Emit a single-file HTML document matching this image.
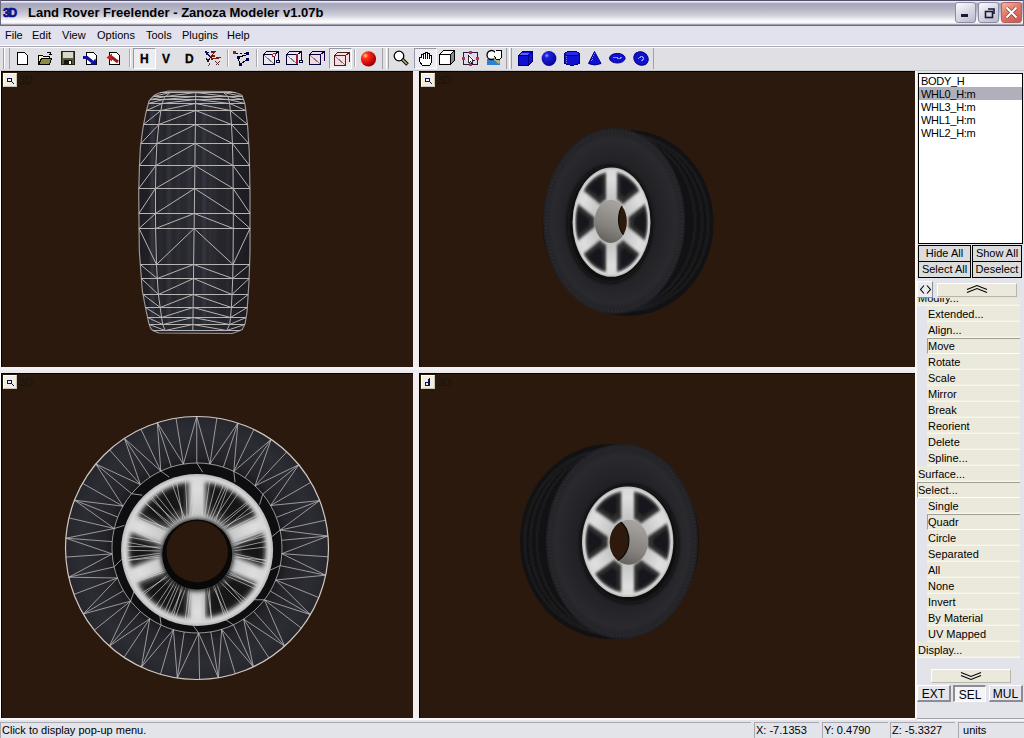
<!DOCTYPE html>
<html><head><meta charset="utf-8">
<style>
*{margin:0;padding:0;box-sizing:border-box}
html,body{width:1024px;height:738px;overflow:hidden;background:#e3e3ea;font-family:"Liberation Sans",sans-serif;font-size:11px;color:#000}
.a{position:absolute}
svg{position:absolute;overflow:visible}
#title{left:0;top:0;width:1024px;height:26px;background:linear-gradient(to bottom,#50506a 0,#50506a 1px,#eaeaf8 1px,#eaeaf8 2px,#b4b4c8 3px,#a6a6ba 4px,#b8b8c8 10px,#d4d4de 16px,#ececf0 19px,#ffffff 22px,#d8d8e0 24px,#6c6c7c 25px,#6c6c7c 26px)}
#title .t{left:28px;top:5px;font-size:13px;font-weight:bold;color:#000;white-space:nowrap}
.tbtn{width:21px;height:21px;border-radius:3px;border:1px solid #8c8ca4;background:linear-gradient(150deg,#fafafe 0%,#dcdce8 45%,#b8b8cc 100%)}
#menu{left:0;top:26px;width:1024px;height:19px;background:#e2e2ee}
#menu span{position:absolute;top:3px;font-size:11px;white-space:nowrap}
.vp{background:#2a190c;border-left:1px solid #000;border-top:1px solid #000;overflow:hidden}
.ico{width:14px;height:14px;background:#efeee0;border-top:1px solid #fff;border-left:1px solid #fff;border-right:1px solid #c8c6b4;border-bottom:1px solid #c8c6b4}
.l3d{color:#181412;font-size:11px;position:absolute}
.lb div{position:absolute;left:0px;height:13px;line-height:15px;width:103px;padding-left:2px;white-space:nowrap;letter-spacing:-0.3px}
.btn{position:absolute;background:#dcdcdc;border:1px solid #000;text-align:center;line-height:14px;font-size:11px;white-space:nowrap}
.ri{position:absolute;height:16px;line-height:17px;background:linear-gradient(to bottom,#ebe9db 0,#ebe9db 14px,#f6f5ee 15px);white-space:nowrap;padding-left:1px}
.box{border-top:1px solid #a09f94;border-left:1px solid #a09f94;border-bottom:1px solid #fff;line-height:15px;padding-left:0}
.sp{position:absolute;top:722px;height:16px;border-top:1px solid #a8a8b0;border-left:1px solid #a8a8b0;padding-left:1px;line-height:15px;white-space:nowrap}
</style></head><body>

<div id="title" class="a"><div class="a t">Land Rover Freelender - Zanoza Modeler v1.07b</div>
<svg style="left:3px;top:7px" width="16" height="11" viewBox="0 0 16 11"><text x="0" y="10" font-family="Liberation Sans" font-weight="bold" font-size="12" fill="#10108c" stroke="#10108c" stroke-width="0.7" letter-spacing="-1.2">3D</text></svg>
<div class="a" style="left:0;top:0;width:1px;height:26px;background:#6a6a80"></div><div class="a" style="left:1023px;top:0;width:1px;height:26px;background:#6a6a80"></div>
</div>
<div class="a tbtn" style="left:955px;top:2px"></div>
<div class="a tbtn" style="left:978px;top:2px"></div>
<div class="a tbtn" style="left:1001px;top:2px;border-color:#b06060;background:linear-gradient(150deg,#f4b8a0 0%,#e07868 45%,#c85850 100%)"></div>
<svg style="left:955px;top:2px" width="21" height="21"><rect x="6" y="12" width="7" height="3" fill="#1a1a30"/></svg>
<svg style="left:978px;top:2px" width="21" height="21"><rect x="7.5" y="9.5" width="7" height="6" fill="none" stroke="#1a1a30" stroke-width="1.6"/><path d="M10 7 H16 V12" fill="none" stroke="#1a1a30" stroke-width="1.6"/></svg>
<svg style="left:1001px;top:2px" width="21" height="21"><path d="M5.5 5.5 L15.5 15.5 M15.5 5.5 L5.5 15.5" stroke="#502828" stroke-width="3.4" opacity="0.6"/><path d="M5.5 5.5 L15.5 15.5 M15.5 5.5 L5.5 15.5" stroke="#fff" stroke-width="2"/></svg>
<div id="menu" class="a">
<span style="left:5px">File</span>
<span style="left:32px">Edit</span>
<span style="left:62px">View</span>
<span style="left:97px">Options</span>
<span style="left:146px">Tools</span>
<span style="left:182px">Plugins</span>
<span style="left:227px">Help</span>
</div>
<div class="a" style="left:0;top:45px;width:1024px;height:1px;background:#fff"></div>
<div class="a" style="left:0;top:46px;width:1024px;height:1px;background:#a8a8b4"></div>
<div class="a" style="left:0;top:47px;width:1024px;height:24px;background:#e0dfe4"></div>
<div class="a" style="left:0;top:70px;width:1024px;height:1px;background:#c4c4cc"></div>
<div class="a" style="left:0;top:47px;width:1024px;height:1px;background:#fbfbfd"></div>
<div class="a" style="left:3px;top:48px;width:1px;height:21px;background:#a0a0a8"></div>
<div class="a" style="left:4px;top:48px;width:1px;height:21px;background:#fff"></div>
<div class="a" style="left:9px;top:48px;width:1px;height:21px;background:#a0a0a8"></div>
<div class="a" style="left:129px;top:49px;width:1px;height:18px;background:#a8a8b0"></div>
<div class="a" style="left:130px;top:49px;width:1px;height:18px;background:#fff"></div>
<div class="a" style="left:227px;top:49px;width:1px;height:18px;background:#a8a8b0"></div>
<div class="a" style="left:228px;top:49px;width:1px;height:18px;background:#fff"></div>
<div class="a" style="left:256px;top:49px;width:1px;height:18px;background:#a8a8b0"></div>
<div class="a" style="left:257px;top:49px;width:1px;height:18px;background:#fff"></div>
<div class="a" style="left:354px;top:49px;width:1px;height:18px;background:#a8a8b0"></div>
<div class="a" style="left:355px;top:49px;width:1px;height:18px;background:#fff"></div>
<div class="a" style="left:382px;top:48px;width:1px;height:21px;background:#a0a0a8"></div>
<div class="a" style="left:386px;top:48px;width:1px;height:21px;background:#fff"></div>
<div class="a" style="left:388px;top:48px;width:1px;height:21px;background:#a0a0a8"></div>
<div class="a" style="left:506px;top:48px;width:1px;height:21px;background:#a0a0a8"></div>
<div class="a" style="left:509px;top:48px;width:1px;height:21px;background:#fff"></div>
<div class="a" style="left:511px;top:48px;width:1px;height:21px;background:#a0a0a8"></div>
<div class="a" style="left:653px;top:48px;width:1px;height:21px;background:#a0a0a8"></div>
<div class="a" style="left:133px;top:48px;width:23px;height:21px;border-top:1px solid #9a9aa4;border-left:1px solid #9a9aa4;border-right:1px solid #fff;border-bottom:1px solid #fff;background:repeating-conic-gradient(#f4f4f8 0 25%,#e4e4ea 0 50%) 0 0/2px 2px"></div>
<div class="a" style="left:329px;top:48px;width:23px;height:21px;border-top:1px solid #9a9aa4;border-left:1px solid #9a9aa4;border-right:1px solid #fff;border-bottom:1px solid #fff;background:repeating-conic-gradient(#f4f4f8 0 25%,#e4e4ea 0 50%) 0 0/2px 2px"></div>
<div class="a" style="left:414px;top:48px;width:23px;height:21px;border-top:1px solid #9a9aa4;border-left:1px solid #9a9aa4;border-right:1px solid #fff;border-bottom:1px solid #fff;background:repeating-conic-gradient(#f4f4f8 0 25%,#e4e4ea 0 50%) 0 0/2px 2px"></div>
<svg style="left:17px;top:52px" width="12" height="13" viewBox="0 0 12 13" shape-rendering="crispEdges"><path d="M0.5 0.5 H7.5 L10.5 3.5 V12.5 H0.5 Z" fill="#fff" stroke="#000"/></svg>
<svg style="left:37px;top:50px" width="16" height="16" viewBox="0 0 16 16" shape-rendering="crispEdges"><path d="M1.5 5.5 H5.5 L6.5 6.5 H12.5 V8.5 H4.5 L1.5 13.5 Z" fill="#f4f4b8" stroke="#000"/><path d="M1.5 14.5 L4.5 8.5 H14.5 L12.5 14.5 Z" fill="#8c8c40" stroke="#000"/><path d="M9.5 2.5 H13.5 V4.5 M12 4.5 H15" stroke="#000" fill="none"/></svg>
<svg style="left:61px;top:51px" width="15" height="14" viewBox="0 0 15 14" shape-rendering="crispEdges"><rect x="0.5" y="0.5" width="13" height="13" fill="#5a5a38" stroke="#202010"/><rect x="2" y="1" width="10" height="6" fill="#d8d8cc"/><rect x="3" y="9" width="8" height="4" fill="#181810"/><rect x="8" y="10" width="2" height="3" fill="#fff"/></svg>
<svg style="left:83px;top:51px" width="16" height="15" viewBox="0 0 16 15" shape-rendering="crispEdges"><path d="M3.5 1.5 H10.5 L13.5 4.5 V13.5 H3.5 Z" fill="#fff" stroke="#000"/><path d="M0 6.5 H4 L9.5 11" stroke="#1010a0" stroke-width="3" fill="none" shape-rendering="auto"/><path d="M7 13.5 L13.5 13.5 L12.5 7.5 Z" fill="#1010a0" shape-rendering="auto"/></svg>
<svg style="left:106px;top:51px" width="16" height="15" viewBox="0 0 16 15" shape-rendering="crispEdges"><path d="M3.5 1.5 H10.5 L13.5 4.5 V13.5 H3.5 Z" fill="#fff" stroke="#000"/><path d="M4 6.5 H6 L12 11" stroke="#a01818" stroke-width="3" fill="none" shape-rendering="auto"/><path d="M0.5 6.5 L6 2.5 L6 10.5 Z" fill="#c02020" shape-rendering="auto"/></svg>
<div class="a" style="left:140px;top:52px;font-size:12px;font-weight:bold;line-height:14px;-webkit-text-stroke:0.3px #000">H</div>
<div class="a" style="left:162px;top:52px;font-size:12px;font-weight:bold;line-height:14px;-webkit-text-stroke:0.3px #000">V</div>
<div class="a" style="left:185px;top:52px;font-size:12px;font-weight:bold;line-height:14px;-webkit-text-stroke:0.3px #000">D</div>
<svg style="left:204px;top:50px" width="18" height="17" viewBox="0 0 18 17" shape-rendering="crispEdges"><path d="M2 2 L7 8" stroke="#101060" stroke-width="1.5"/><path d="M1 1 L5 2 L2 5 Z" fill="#101060"/><path d="M7 2 H11 L7 6 H11" stroke="#701818" stroke-width="1.3" fill="none"/><path d="M7 9 L17 7.5" stroke="#801818" stroke-width="1.5"/><path d="M2 8.5 L4 11 L6 8.5 M4 11 V12" stroke="#201010" stroke-width="1.2" fill="none"/><path d="M4.5 12 L7 14 L4.5 15.5 Z" fill="#207020"/><path d="M11.5 11.5 L15.5 15.5 M15.5 11.5 L11.5 15.5" stroke="#502020" stroke-width="1.2"/></svg>
<svg style="left:233px;top:50px" width="17" height="17" viewBox="0 0 17 17" shape-rendering="crispEdges"><rect x="0" y="1" width="3" height="3" fill="#902030"/><path d="M3 3 H13" stroke="#000020" stroke-dasharray="2 2"/><rect x="13" y="2" width="3" height="3" fill="#000050"/><path d="M13 5 L6 7" stroke="#000"/><rect x="4" y="6" width="3" height="3" fill="#000050"/><path d="M5.5 9 L7 14 L14 10" stroke="#000" fill="none"/><rect x="6" y="13" width="3" height="3" fill="#000050"/><rect x="13" y="8" width="3" height="3" fill="#000050"/></svg>
<svg style="left:263px;top:50px" width="17" height="16" viewBox="0 0 17 16" shape-rendering="crispEdges"><path d="M0.5 4.5 L3.5 1.5 H15.5 V11.5 L11.5 14.5 H0.5 Z" fill="#eae8f0" stroke="none"/><path d="M3.5 1.5 H15.5 V11 M0.5 4.5 L3.5 1.5 M11.5 4.5 L15.5 1.5" stroke="#000030" fill="none"/><rect x="0.5" y="4.5" width="11" height="10" rx="1.5" fill="none" stroke="#000030" stroke-width="1.2"/><path d="M1.5 5.5 L11 14" stroke="#808080"/><circle cx="11" cy="5" r="1.5" fill="#fff" stroke="#a02030"/><circle cx="15" cy="11.5" r="1.5" fill="#fff" stroke="#000030"/></svg>
<svg style="left:286px;top:50px" width="17" height="16" viewBox="0 0 17 16" shape-rendering="crispEdges"><path d="M0.5 4.5 L3.5 1.5 H15.5 V11.5 L11.5 14.5 H0.5 Z" fill="#eae8f0" stroke="none"/><path d="M3.5 1.5 H15.5 V11 M0.5 4.5 L3.5 1.5 M11.5 4.5 L15.5 1.5" stroke="#000030" fill="none"/><rect x="0.5" y="4.5" width="11" height="10" rx="1.5" fill="none" stroke="#000030" stroke-width="1.2"/><path d="M1.5 5.5 L11 14" stroke="#808080"/><path d="M11 4 V14" stroke="#a02040" stroke-width="1.5"/><circle cx="15" cy="11.5" r="1.5" fill="#fff" stroke="#000030"/></svg>
<svg style="left:309px;top:50px" width="17" height="16" viewBox="0 0 17 16" shape-rendering="crispEdges"><path d="M0.5 4.5 L3.5 1.5 H15.5 V11.5 L11.5 14.5 H0.5 Z" fill="#f4d8e4" stroke="none"/><path d="M3.5 1.5 H15.5 V11 M0.5 4.5 L3.5 1.5 M11.5 4.5 L15.5 1.5" stroke="#000040" fill="none"/><rect x="0.5" y="4.5" width="11" height="10" rx="1.5" fill="none" stroke="#000040" stroke-width="1.2"/><path d="M1.5 5.5 L11 14" stroke="#808080"/></svg>
<svg style="left:334px;top:51px" width="17" height="16" viewBox="0 0 17 16" shape-rendering="crispEdges"><path d="M0.5 4.5 L3.5 1.5 H15.5 V11.5 L11.5 14.5 H0.5 Z" fill="#f8dce0" stroke="none"/><path d="M3.5 1.5 H15.5 V11 M0.5 4.5 L3.5 1.5 M11.5 4.5 L15.5 1.5" stroke="#502020" fill="none"/><rect x="0.5" y="4.5" width="11" height="10" rx="1.5" fill="none" stroke="#502020" stroke-width="1.2"/><path d="M1.5 5.5 L11 14" stroke="#808080"/></svg>
<svg style="left:360px;top:51px" width="17" height="16"><defs><radialGradient id="rs" cx="0.3" cy="0.3" r="0.75"><stop offset="0" stop-color="#ffe070"/><stop offset="0.25" stop-color="#ff3020"/><stop offset="0.7" stop-color="#d00808"/><stop offset="1" stop-color="#900000"/></radialGradient></defs><circle cx="8.5" cy="7.8" r="7.6" fill="url(#rs)"/></svg>
<svg style="left:393px;top:50px" width="17" height="17" viewBox="0 0 17 17" shape-rendering="crispEdges"><circle cx="6" cy="6" r="4.8" fill="#fff" stroke="#000" stroke-width="1.3" shape-rendering="auto"/><path d="M9 9 L14.5 14.5" stroke="#000" stroke-width="3.5" shape-rendering="auto"/><path d="M9.5 9.5 L14 14" stroke="#b8b870" stroke-width="1.6" shape-rendering="auto"/></svg>
<svg style="left:419px;top:52px" width="14" height="15" viewBox="0 0 14 15" shape-rendering="crispEdges"><path d="M3.5 13.5 L0.5 9.5 V5.5 H2.5 V2.5 H4.5 V1.5 H6.5 V0.5 H8.5 V1.5 H10.5 V3.5 H12.5 V10.5 L10.5 13.5 Z" fill="#fff" stroke="#000"/><path d="M4.5 2 V7 M6.5 1 V7 M8.5 1 V7 M10.5 3 V7" stroke="#000"/></svg>
<svg style="left:439px;top:50px" width="17" height="16" viewBox="0 0 17 16" shape-rendering="crispEdges"><path d="M0.5 4.5 L4.5 0.5 H15.5 V10.5 L11.5 14.5 Z" fill="#8a8a8a" stroke="#000"/><rect x="0.5" y="4.5" width="11" height="10" fill="#fff" stroke="#000"/><path d="M0.5 4.5 L4.5 0.5 H15.5 L11.5 4.5 Z" fill="#fff" stroke="#000"/></svg>
<svg style="left:462px;top:50px" width="18" height="17" viewBox="0 0 18 17" shape-rendering="crispEdges"><rect x="1.5" y="2.5" width="14" height="12" fill="#e0d8f0" stroke="#301838" stroke-width="1.2"/><circle cx="8.5" cy="2.5" r="1.5" fill="#c03040"/><circle cx="1.5" cy="8.5" r="1.5" fill="#c03040"/><circle cx="15.5" cy="8.5" r="1.5" fill="#c03040"/><circle cx="8.5" cy="14.5" r="1.5" fill="#c03040"/><path d="M6.5 4.5 V13 L8.5 11 L10 14 L11 13.5 L10 10.5 H12.5 Z" fill="#fff" stroke="#000" stroke-width="0.8"/></svg>
<svg style="left:486px;top:49px" width="18" height="18" viewBox="0 0 18 18" shape-rendering="crispEdges"><rect x="1" y="10" width="13" height="6" fill="#3080d0"/><circle cx="5.5" cy="6" r="4.5" fill="#fff" stroke="#000" stroke-width="1.3" shape-rendering="auto"/><path d="M8.5 9 L13.5 14" stroke="#b8b860" stroke-width="3" shape-rendering="auto"/><path d="M9.5 1.5 H15.5 V8.5 L13.5 10.5 H10.5 L8.5 7.5" fill="#fff" stroke="#000"/></svg>
<svg style="left:518px;top:51px" width="16" height="15" viewBox="0 0 16 15" shape-rendering="crispEdges"><path d="M0.5 4.5 L4.5 0.5 H14.5 V10.5 L10.5 14.5 H0.5 Z" fill="#1010d0" stroke="#000080"/><path d="M0.5 4.5 H10.5 V14.5 M10.5 4.5 L14.5 0.5" stroke="#000080" fill="none"/><path d="M1.5 3.5 L4.5 1.5 H12.5 L10 3.5 Z" fill="#6060ff"/></svg>
<svg style="left:541px;top:51px" width="17" height="15"><defs><radialGradient id="bs" cx="0.35" cy="0.3" r="0.8"><stop offset="0" stop-color="#a0a0ff"/><stop offset="0.2" stop-color="#2020e0"/><stop offset="1" stop-color="#000090"/></radialGradient></defs><circle cx="8" cy="7.5" r="7.4" fill="url(#bs)"/></svg>
<svg style="left:564px;top:51px" width="16" height="15" viewBox="0 0 16 15" shape-rendering="crispEdges"><path d="M0.5 2.5 Q8 -1 15.5 2.5 V12.5 Q8 16 0.5 12.5 Z" fill="#1010d0" stroke="#000080"/><ellipse cx="8" cy="2.8" rx="7.3" ry="2.2" fill="#2828f0" stroke="#000080"/><path d="M2 5 V12" stroke="#8080ff" stroke-dasharray="1 1"/></svg>
<svg style="left:588px;top:51px" width="14" height="15" viewBox="0 0 14 15" shape-rendering="crispEdges"><path d="M6.5 0.5 L13 12.5 Q6.5 15.5 0.5 12.5 Z" fill="#1010d0" stroke="#000080" shape-rendering="auto"/><path d="M6.5 2 L3 12" stroke="#8080ff" stroke-dasharray="1 1"/></svg>
<svg style="left:609px;top:53px" width="17" height="11" viewBox="0 0 17 11" shape-rendering="crispEdges"><ellipse cx="8.3" cy="5.2" rx="7.8" ry="4.8" fill="#1010d0" stroke="#000080" shape-rendering="auto"/><path d="M4 5 L7 4 L10 6 L13 4" stroke="#9090ff" fill="none"/></svg>
<svg style="left:633px;top:51px" width="17" height="15" viewBox="0 0 17 15" shape-rendering="crispEdges"><ellipse cx="8" cy="7.5" rx="7.5" ry="6.5" transform="rotate(30 8 7.5)" fill="#1010d0" stroke="#000080" shape-rendering="auto"/><path d="M5 8 L9 5 L11 8 L8 10" stroke="#9090ff" fill="none"/></svg>
<div class="a" style="left:0;top:71px;width:1px;height:647px;background:#fff"></div>
<div class="a" style="left:413px;top:71px;width:6px;height:647px;background:#f0eeee"></div>
<div class="a" style="left:0;top:367px;width:915px;height:3px;background:#f6f2f2"></div>
<div class="a" style="left:0;top:370px;width:915px;height:3px;background:#eceaee"></div>
<div class="a vp" style="left:1px;top:71px;width:412px;height:296px"></div>
<div class="a vp" style="left:419px;top:71px;width:496px;height:296px"></div>
<div class="a vp" style="left:1px;top:373px;width:412px;height:345px"></div>
<div class="a vp" style="left:419px;top:373px;width:496px;height:345px"></div>
<div class="a" style="left:0;top:718px;width:915px;height:2px;background:#fbf8f8"></div>
<div class="a" style="left:915px;top:71px;width:2px;height:647px;background:#fbf8f8"></div>
<svg style="left:2px;top:72px;overflow:hidden" width="411" height="295" viewBox="2 72 411 295"><defs><linearGradient id="tg1" x1="0" x2="1" y1="0" y2="0"><stop offset="0" stop-color="#1c1c22"/><stop offset="0.2" stop-color="#26262c"/><stop offset="0.5" stop-color="#2a2a32"/><stop offset="0.8" stop-color="#24242a"/><stop offset="1" stop-color="#1a1a20"/></linearGradient><filter id="bl2" x="-1" y="-0.2" width="3" height="1.4"><feGaussianBlur stdDeviation="1.2"/></filter></defs><path d="M168.8 91 L159 93 L154.8 95 L152.6 97 L150.8 99 L149 101 L148.5 103 L148 105 L147.4 107 L146.9 109 L146.4 111 L145.9 113 L145.5 115 L145.1 117 L144.7 119 L144.3 121 L143.9 123 L143.5 125 L143.2 127 L142.8 129 L142.5 131 L142.3 133 L142 135 L141.7 137 L141.5 139 L141.2 141 L141 143 L140.7 145 L140.4 147 L140.3 149 L140.2 151 L140.1 153 L140 155 L139.9 157 L139.8 159 L139.7 161 L139.6 163 L139.5 165 L139.4 167 L139.4 169 L139.3 171 L139.3 173 L139.2 175 L139.2 177 L139.1 179 L139 181 L139 183 L138.9 185 L138.9 187 L138.8 189 L138.8 191 L138.7 193 L138.7 195 L138.7 197 L138.8 199 L138.8 201 L138.8 203 L138.8 205 L138.8 207 L138.9 209 L138.9 211 L138.9 213 L138.9 215 L138.9 217 L139 219 L139 221 L139 223 L139 225 L139 227 L139.1 229 L139.1 231 L139.1 233 L139.1 235 L139.2 237 L139.2 239 L139.2 241 L139.2 243 L139.2 245 L139.3 247 L139.3 249 L139.3 251 L139.5 253 L139.6 255 L139.8 257 L139.9 259 L140.1 261 L140.2 263 L140.4 265 L140.5 267 L140.7 269 L140.8 271 L141 273 L141.1 275 L141.3 277 L141.4 279 L141.6 281 L141.7 283 L141.9 285 L142 287 L142.2 289 L142.4 291 L142.7 293 L143.1 295 L143.5 297 L143.9 299 L144.2 301 L144.6 303 L145 305 L145.4 307 L145.8 309 L146.2 311 L146.6 313 L147.1 315 L147.5 317 L147.9 319 L148.3 321 L148.8 323 L149.4 325 L150.2 327 L151.1 329 L153.9 331 L158.8 333 L232 333.5 L237.7 331.5 L242.2 329.5 L243.2 327.5 L244.2 325.5 L245.1 323.5 L245.4 321.5 L245.8 319.5 L246.1 317.5 L246.4 315.5 L246.8 313.5 L247 311.5 L247.2 309.5 L247.3 307.5 L247.4 305.5 L247.6 303.5 L247.7 301.5 L247.8 299.5 L248 297.5 L248.1 295.5 L248.2 293.5 L248.3 291.5 L248.5 289.5 L248.6 287.5 L248.7 285.5 L248.9 283.5 L249 281.5 L249.1 279.5 L249.1 277.5 L249.2 275.5 L249.3 273.5 L249.3 271.5 L249.4 269.5 L249.5 267.5 L249.5 265.5 L249.6 263.5 L249.7 261.5 L249.7 259.5 L249.8 257.5 L249.9 255.5 L249.9 253.5 L250 251.5 L250 249.5 L250 247.5 L250 245.5 L250 243.5 L250 241.5 L250 239.5 L250 237.5 L250 235.5 L250 233.5 L250 231.5 L250 229.5 L250 227.5 L250 225.5 L250 223.5 L250 221.5 L250 219.5 L250 217.5 L250 215.5 L250 213.5 L250 211.5 L250 209.5 L250 207.5 L250 205.5 L250 203.5 L250 201.5 L250 199.5 L250 197.5 L250 195.5 L250 193.5 L250 191.5 L249.9 189.5 L249.9 187.5 L249.9 185.5 L249.8 183.5 L249.8 181.5 L249.8 179.5 L249.7 177.5 L249.7 175.5 L249.7 173.5 L249.6 171.5 L249.6 169.5 L249.5 167.5 L249.5 165.5 L249.5 163.5 L249.4 161.5 L249.4 159.5 L249.4 157.5 L249.3 155.5 L249.3 153.5 L249.2 151.5 L249.1 149.5 L249 147.5 L248.8 145.5 L248.7 143.5 L248.6 141.5 L248.5 139.5 L248.3 137.5 L248.2 135.5 L248.1 133.5 L248 131.5 L247.8 129.5 L247.7 127.5 L247.6 125.5 L247.4 123.5 L247.1 121.5 L246.9 119.5 L246.6 117.5 L246.4 115.5 L246.1 113.5 L245.9 111.5 L245.7 109.5 L245.4 107.5 L245.2 105.5 L244.8 103.5 L244.1 101.5 L243.4 99.5 L242.7 97.5 L242 95.5 L238.1 93.5 L230.7 91.5Z" fill="url(#tg1)"/><rect x="177.4" y="100" width="2" height="225" fill="#4a4a56" opacity="0.3" filter="url(#bl2)"/><rect x="152.2" y="100" width="3.1" height="225" fill="#4a4a56" opacity="0.2" filter="url(#bl2)"/><rect x="150.8" y="100" width="3" height="225" fill="#4a4a56" opacity="0.2" filter="url(#bl2)"/><rect x="188.4" y="100" width="1.7" height="225" fill="#4a4a56" opacity="0.2" filter="url(#bl2)"/><rect x="187.5" y="100" width="4" height="225" fill="#4a4a56" opacity="0.2" filter="url(#bl2)"/><rect x="167.3" y="100" width="3.4" height="225" fill="#4a4a56" opacity="0.4" filter="url(#bl2)"/><rect x="202.7" y="100" width="2.7" height="225" fill="#4a4a56" opacity="0.4" filter="url(#bl2)"/><rect x="149.7" y="100" width="4.1" height="225" fill="#4a4a56" opacity="0.2" filter="url(#bl2)"/><rect x="159.4" y="100" width="1.9" height="225" fill="#4a4a56" opacity="0.2" filter="url(#bl2)"/><rect x="226.6" y="100" width="2" height="225" fill="#4a4a56" opacity="0.3" filter="url(#bl2)"/><rect x="208.9" y="100" width="2.6" height="225" fill="#4a4a56" opacity="0.3" filter="url(#bl2)"/><rect x="151.3" y="100" width="1.7" height="225" fill="#4a4a56" opacity="0.2" filter="url(#bl2)"/><rect x="213" y="100" width="2.8" height="225" fill="#4a4a56" opacity="0.2" filter="url(#bl2)"/><rect x="203.6" y="100" width="2.9" height="225" fill="#4a4a56" opacity="0.2" filter="url(#bl2)"/><path d="M168.8 91 L159 93 L154.8 95 L152.6 97 L150.8 99 L149 101 L148.5 103 L148 105 L147.4 107 L146.9 109 L146.4 111 L145.9 113 L145.5 115 L145.1 117 L144.7 119 L144.3 121 L143.9 123 L143.5 125 L143.2 127 L142.8 129 L142.5 131 L142.3 133 L142 135 L141.7 137 L141.5 139 L141.2 141 L141 143 L140.7 145 L140.4 147 L140.3 149 L140.2 151 L140.1 153 L140 155 L139.9 157 L139.8 159 L139.7 161 L139.6 163 L139.5 165 L139.4 167 L139.4 169 L139.3 171 L139.3 173 L139.2 175 L139.2 177 L139.1 179 L139 181 L139 183 L138.9 185 L138.9 187 L138.8 189 L138.8 191 L138.7 193 L138.7 195 L138.7 197 L138.8 199 L138.8 201 L138.8 203 L138.8 205 L138.8 207 L138.9 209 L138.9 211 L138.9 213 L138.9 215 L138.9 217 L139 219 L139 221 L139 223 L139 225 L139 227 L139.1 229 L139.1 231 L139.1 233 L139.1 235 L139.2 237 L139.2 239 L139.2 241 L139.2 243 L139.2 245 L139.3 247 L139.3 249 L139.3 251 L139.5 253 L139.6 255 L139.8 257 L139.9 259 L140.1 261 L140.2 263 L140.4 265 L140.5 267 L140.7 269 L140.8 271 L141 273 L141.1 275 L141.3 277 L141.4 279 L141.6 281 L141.7 283 L141.9 285 L142 287 L142.2 289 L142.4 291 L142.7 293 L143.1 295 L143.5 297 L143.9 299 L144.2 301 L144.6 303 L145 305 L145.4 307 L145.8 309 L146.2 311 L146.6 313 L147.1 315 L147.5 317 L147.9 319 L148.3 321 L148.8 323 L149.4 325 L150.2 327 L151.1 329 L153.9 331 L158.8 333 L232 333.5 L237.7 331.5 L242.2 329.5 L243.2 327.5 L244.2 325.5 L245.1 323.5 L245.4 321.5 L245.8 319.5 L246.1 317.5 L246.4 315.5 L246.8 313.5 L247 311.5 L247.2 309.5 L247.3 307.5 L247.4 305.5 L247.6 303.5 L247.7 301.5 L247.8 299.5 L248 297.5 L248.1 295.5 L248.2 293.5 L248.3 291.5 L248.5 289.5 L248.6 287.5 L248.7 285.5 L248.9 283.5 L249 281.5 L249.1 279.5 L249.1 277.5 L249.2 275.5 L249.3 273.5 L249.3 271.5 L249.4 269.5 L249.5 267.5 L249.5 265.5 L249.6 263.5 L249.7 261.5 L249.7 259.5 L249.8 257.5 L249.9 255.5 L249.9 253.5 L250 251.5 L250 249.5 L250 247.5 L250 245.5 L250 243.5 L250 241.5 L250 239.5 L250 237.5 L250 235.5 L250 233.5 L250 231.5 L250 229.5 L250 227.5 L250 225.5 L250 223.5 L250 221.5 L250 219.5 L250 217.5 L250 215.5 L250 213.5 L250 211.5 L250 209.5 L250 207.5 L250 205.5 L250 203.5 L250 201.5 L250 199.5 L250 197.5 L250 195.5 L250 193.5 L250 191.5 L249.9 189.5 L249.9 187.5 L249.9 185.5 L249.8 183.5 L249.8 181.5 L249.8 179.5 L249.7 177.5 L249.7 175.5 L249.7 173.5 L249.6 171.5 L249.6 169.5 L249.5 167.5 L249.5 165.5 L249.5 163.5 L249.4 161.5 L249.4 159.5 L249.4 157.5 L249.3 155.5 L249.3 153.5 L249.2 151.5 L249.1 149.5 L249 147.5 L248.8 145.5 L248.7 143.5 L248.6 141.5 L248.5 139.5 L248.3 137.5 L248.2 135.5 L248.1 133.5 L248 131.5 L247.8 129.5 L247.7 127.5 L247.6 125.5 L247.4 123.5 L247.1 121.5 L246.9 119.5 L246.6 117.5 L246.4 115.5 L246.1 113.5 L245.9 111.5 L245.7 109.5 L245.4 107.5 L245.2 105.5 L244.8 103.5 L244.1 101.5 L243.4 99.5 L242.7 97.5 L242 95.5 L238.1 93.5 L230.7 91.5Z" fill="none" stroke="#9a9696" stroke-width="1.2"/><path d="M160 92.5L236 92.5M153 96.5L242.4 96.5M150.3 99.5L243.4 99.5M148.3 103.5L244.8 103.5M146.5 110.5L245.8 110.5M143.6 124.5L247.5 124.5M140.9 143.5L248.7 143.5M139.5 165.5L249.5 165.5M138.8 188.5L249.9 188.5M138.9 213.5L250 213.5M139.1 228.5L250 228.5M140.3 264.5L249.6 264.5M141.4 278.5L249.1 278.5M143 294.5L248.1 294.5M145.5 307.5L247.3 307.5M147.6 317.5L246.1 317.5M149.2 324.5L244.8 324.5M152.7 330.5L240.6 330.5M170.3 92.5L165.4 96.5M223.5 92.5L228 96.5M195.8 92.5L195.7 96.5M165.4 96.5L163.5 99.5M228 96.5L228.7 99.5M195.7 96.5L195.7 99.5M163.5 99.5L162.1 103.5M228.7 99.5L229.7 103.5M195.7 99.5L195.6 103.5M162.1 103.5L160.9 110.5M229.7 103.5L230.3 110.5M195.6 103.5L195.6 110.5M160.9 110.5L158.8 124.5M230.3 110.5L231.5 124.5M195.6 110.5L195.4 124.5M158.8 124.5L156.9 143.5M231.5 124.5L232.4 143.5M195.4 124.5L195.1 143.5M156.9 143.5L155.9 165.5M232.4 143.5L233 165.5M195.1 143.5L194.9 165.5M155.9 165.5L155.5 188.5M233 165.5L233.2 188.5M194.9 165.5L194.6 188.5M155.5 188.5L155.5 213.5M233.2 188.5L233.3 213.5M194.6 188.5L194.3 213.5M155.5 213.5L155.6 228.5M233.3 213.5L233.3 228.5M194.3 213.5L194.1 228.5M155.6 228.5L156.5 264.5M233.3 228.5L233 264.5M194.1 228.5L193.6 264.5M156.5 264.5L157.3 278.5M233 264.5L232.7 278.5M193.6 264.5L193.5 278.5M157.3 278.5L158.4 294.5M232.7 278.5L232 294.5M193.5 278.5L193.3 294.5M158.4 294.5L160.2 307.5M232 294.5L231.4 307.5M193.3 294.5L193.1 307.5M160.2 307.5L161.6 317.5M231.4 307.5L230.5 317.5M193.1 307.5L193 317.5M161.6 317.5L162.7 324.5M230.5 317.5L229.6 324.5M193 317.5L192.9 324.5M162.7 324.5L165.2 330.5M229.6 324.5L226.7 330.5M192.9 324.5L192.8 330.5M195.8 92.5L165.4 96.5M195.8 92.5L228 96.5M170.3 92.5L153 96.5M223.5 92.5L242.4 96.5M195.7 96.5L163.5 99.5M195.7 96.5L228.7 99.5M165.4 96.5L150.3 99.5M228 96.5L243.4 99.5M195.7 99.5L162.1 103.5M195.7 99.5L229.7 103.5M163.5 99.5L148.3 103.5M228.7 99.5L244.8 103.5M195.6 103.5L160.9 110.5M195.6 103.5L230.3 110.5M162.1 103.5L146.5 110.5M229.7 103.5L245.8 110.5M195.6 110.5L158.8 124.5M195.6 110.5L231.5 124.5M160.9 110.5L143.6 124.5M230.3 110.5L247.5 124.5M195.4 124.5L156.9 143.5M195.4 124.5L232.4 143.5M158.8 124.5L140.9 143.5M231.5 124.5L248.7 143.5M195.1 143.5L155.9 165.5M195.1 143.5L233 165.5M156.9 143.5L139.5 165.5M232.4 143.5L249.5 165.5M194.9 165.5L155.5 188.5M194.9 165.5L233.2 188.5M155.9 165.5L138.8 188.5M233 165.5L249.9 188.5M194.6 188.5L155.5 213.5M194.6 188.5L233.3 213.5M155.5 188.5L138.9 213.5M233.2 188.5L250 213.5M194.3 213.5L155.6 228.5M194.3 213.5L233.3 228.5M155.5 213.5L139.1 228.5M233.3 213.5L250 228.5M194.1 228.5L156.5 264.5M194.1 228.5L233 264.5M139.1 228.5L156.5 264.5M250 228.5L233 264.5M193.6 264.5L157.3 278.5M193.6 264.5L232.7 278.5M140.3 264.5L157.3 278.5M249.6 264.5L232.7 278.5M193.5 278.5L158.4 294.5M193.5 278.5L232 294.5M141.4 278.5L158.4 294.5M249.1 278.5L232 294.5M193.3 294.5L160.2 307.5M193.3 294.5L231.4 307.5M143 294.5L160.2 307.5M248.1 294.5L231.4 307.5M193.1 307.5L161.6 317.5M193.1 307.5L230.5 317.5M145.5 307.5L161.6 317.5M247.3 307.5L230.5 317.5M193 317.5L162.7 324.5M193 317.5L229.6 324.5M147.6 317.5L162.7 324.5M246.1 317.5L229.6 324.5M192.9 324.5L165.2 330.5M192.9 324.5L226.7 330.5M149.2 324.5L165.2 330.5M244.8 324.5L226.7 330.5" stroke="#b8b4b4" stroke-width="1" fill="none"/></svg><svg style="left:420px;top:72px;overflow:hidden" width="495" height="295" viewBox="420 72 495 295"><defs><radialGradient id="w2rg"><stop offset="0.4" stop-color="#c4c4c4"/><stop offset="0.8" stop-color="#dedede"/><stop offset="0.95" stop-color="#d8d8d8"/><stop offset="1" stop-color="#b8b8b8"/></radialGradient><filter id="w2bl" x="-0.5" y="-0.5" width="2" height="2"><feGaussianBlur stdDeviation="2.6"/></filter><radialGradient id="w2tire" cx="0.5" cy="0.5" r="0.5"><stop offset="0.45" stop-color="#18181a"/><stop offset="0.62" stop-color="#222226"/><stop offset="0.88" stop-color="#2a2a2e"/><stop offset="1" stop-color="#202024"/></radialGradient><linearGradient id="w2hub" x1="0" x2="0.3" y1="1" y2="0"><stop offset="0" stop-color="#5a5652"/><stop offset="0.45" stop-color="#84807c"/><stop offset="1" stop-color="#a4a09c"/></linearGradient><filter id="w2b2" x="-0.3" y="-0.3" width="1.6" height="1.6"><feGaussianBlur stdDeviation="2"/></filter><filter id="w2b1" x="-0.3" y="-0.3" width="1.6" height="1.6"><feGaussianBlur stdDeviation="0.8"/></filter></defs><ellipse cx="628" cy="223" rx="85.5" ry="93" fill="#121214"/><path d="M618.9 133.7 A76.1 88 0 0 1 618.9 309.7" fill="none" stroke="#222226" stroke-width="1.6" filter="url(#w2b1)"/><path d="M622.4 134.2 A79.7 88 0 0 1 622.4 310.2" fill="none" stroke="#222226" stroke-width="1.6" filter="url(#w2b1)"/><path d="M625.5 134.6 A82.9 88 0 0 1 625.5 310.6" fill="none" stroke="#222226" stroke-width="1.6" filter="url(#w2b1)"/><ellipse cx="614" cy="221" rx="71" ry="93" fill="url(#w2tire)"/><ellipse cx="614" cy="221" rx="68" ry="90" fill="none" stroke="#303036" stroke-width="2.5" stroke-dasharray="1.5 2" opacity="0.6"/><ellipse cx="609.5" cy="224.2" rx="42" ry="58.6" fill="#0c0c0e" filter="url(#w2b2)"/><g transform="translate(611.5 222.2) scale(0.3900 0.5460)"><clipPath id="w2cl"><circle cx="0" cy="0" r="95"/></clipPath><circle cx="0" cy="0" r="100" fill="url(#w2rg)"/><g clip-path="url(#w2cl)"><path d="M71.7 57.6 L66.1 64 L59.9 69.8 L53.2 75.1 L46 79.7 L38.4 83.6 L30.5 86.8 L22.4 89.2 L14 90.9 L14 41.7 L16.1 41 L18.1 40.1 L20.1 39.2 L22 38.1 L23.9 37 L25.7 35.7 L27.4 34.4 L29.1 33Z" fill="#303030" filter="url(#w2bl)"/><path d="M62.6 62 L58.4 66.1 L53.8 69.8 L49.1 73.2 L44.1 76.3 L38.9 79.1 L33.5 81.5 L28 83.6 L22.4 85.3 L22.4 51.3 L23.8 50.7 L25.2 50 L26.6 49.3 L28 48.5 L29.3 47.7 L30.7 46.9 L32 46 L33.2 45.1Z" fill="#18181a" filter="url(#w2bl)"/><path d="M-14 90.9 L-22.4 89.2 L-30.5 86.8 L-38.4 83.6 L-46 79.7 L-53.2 75.1 L-59.9 69.8 L-66.1 64 L-71.7 57.6 L-29.1 33 L-27.4 34.4 L-25.7 35.7 L-23.9 37 L-22 38.1 L-20.1 39.2 L-18.1 40.1 L-16.1 41 L-14 41.7Z" fill="#303030" filter="url(#w2bl)"/><path d="M-22.4 85.3 L-28 83.6 L-33.5 81.5 L-38.9 79.1 L-44.1 76.3 L-49.1 73.2 L-53.8 69.8 L-58.4 66.1 L-62.6 62 L-33.2 45.1 L-32 46 L-30.7 46.9 L-29.3 47.7 L-28 48.5 L-26.6 49.3 L-25.2 50 L-23.8 50.7 L-22.4 51.3Z" fill="#18181a" filter="url(#w2bl)"/><path d="M-85.7 33.3 L-88.5 25.3 L-90.4 17 L-91.6 8.5 L-92 0 L-91.6 -8.5 L-90.4 -17 L-88.5 -25.3 L-85.7 -33.3 L-43.1 -8.7 L-43.5 -6.6 L-43.8 -4.4 L-43.9 -2.2 L-44 -0 L-43.9 2.2 L-43.8 4.4 L-43.5 6.6 L-43.1 8.7Z" fill="#303030" filter="url(#w2bl)"/><path d="M-85 23.2 L-86.4 17.5 L-87.4 11.7 L-88 5.9 L-88.2 0 L-88 -5.9 L-87.4 -11.7 L-86.4 -17.5 L-85 -23.2 L-55.6 -6.3 L-55.8 -4.7 L-55.9 -3.1 L-56 -1.6 L-56 -0 L-56 1.6 L-55.9 3.1 L-55.8 4.7 L-55.6 6.3Z" fill="#18181a" filter="url(#w2bl)"/><path d="M-71.7 -57.6 L-66.1 -64 L-59.9 -69.8 L-53.2 -75.1 L-46 -79.7 L-38.4 -83.6 L-30.5 -86.8 L-22.4 -89.2 L-14 -90.9 L-14 -41.7 L-16.1 -41 L-18.1 -40.1 L-20.1 -39.2 L-22 -38.1 L-23.9 -37 L-25.7 -35.7 L-27.4 -34.4 L-29.1 -33Z" fill="#303030" filter="url(#w2bl)"/><path d="M-62.6 -62 L-58.4 -66.1 L-53.8 -69.8 L-49.1 -73.2 L-44.1 -76.3 L-38.9 -79.1 L-33.5 -81.5 L-28 -83.6 L-22.4 -85.3 L-22.4 -51.3 L-23.8 -50.7 L-25.2 -50 L-26.6 -49.3 L-28 -48.5 L-29.3 -47.7 L-30.7 -46.9 L-32 -46 L-33.2 -45.1Z" fill="#18181a" filter="url(#w2bl)"/><path d="M14 -90.9 L22.4 -89.2 L30.5 -86.8 L38.4 -83.6 L46 -79.7 L53.2 -75.1 L59.9 -69.8 L66.1 -64 L71.7 -57.6 L29.1 -33 L27.4 -34.4 L25.7 -35.7 L23.9 -37 L22 -38.1 L20.1 -39.2 L18.1 -40.1 L16.1 -41 L14 -41.7Z" fill="#303030" filter="url(#w2bl)"/><path d="M22.4 -85.3 L28 -83.6 L33.5 -81.5 L38.9 -79.1 L44.1 -76.3 L49.1 -73.2 L53.8 -69.8 L58.4 -66.1 L62.6 -62 L33.2 -45.1 L32 -46 L30.7 -46.9 L29.3 -47.7 L28 -48.5 L26.6 -49.3 L25.2 -50 L23.8 -50.7 L22.4 -51.3Z" fill="#18181a" filter="url(#w2bl)"/><path d="M85.7 -33.3 L88.5 -25.3 L90.4 -17 L91.6 -8.5 L92 -0 L91.6 8.5 L90.4 17 L88.5 25.3 L85.7 33.3 L43.1 8.7 L43.5 6.6 L43.8 4.4 L43.9 2.2 L44 -0 L43.9 -2.2 L43.8 -4.4 L43.5 -6.6 L43.1 -8.7Z" fill="#303030" filter="url(#w2bl)"/><path d="M85 -23.2 L86.4 -17.5 L87.4 -11.7 L88 -5.9 L88.2 -0 L88 5.9 L87.4 11.7 L86.4 17.5 L85 23.2 L55.6 6.3 L55.8 4.7 L55.9 3.1 L56 1.6 L56 -0 L56 -1.6 L55.9 -3.1 L55.8 -4.7 L55.6 -6.3Z" fill="#18181a" filter="url(#w2bl)"/></g></g><ellipse cx="610.7" cy="221.4" rx="16.1" ry="21.6" fill="url(#w2hub)"/><clipPath id="w2hc"><ellipse cx="610.7" cy="221.4" rx="16.1" ry="21.6"/></clipPath><ellipse clip-path="url(#w2hc)" cx="634.7" cy="219.4" rx="16.1" ry="21.6" fill="#2e1a0c" stroke="#080808" stroke-width="1.2"/></svg><svg style="left:2px;top:374px;overflow:hidden" width="411" height="344" viewBox="2 374 411 344"><defs><radialGradient id="w3rg"><stop offset="0.4" stop-color="#c4c4c4"/><stop offset="0.8" stop-color="#dedede"/><stop offset="0.95" stop-color="#d8d8d8"/><stop offset="1" stop-color="#b8b8b8"/></radialGradient><filter id="w3bl" x="-0.5" y="-0.5" width="2" height="2"><feGaussianBlur stdDeviation="2.6"/></filter><radialGradient id="w3t"><stop offset="0.64" stop-color="#1a1a1e"/><stop offset="0.7" stop-color="#24242a"/><stop offset="0.88" stop-color="#2c2c34"/><stop offset="1" stop-color="#26262c"/></radialGradient></defs><circle cx="197" cy="548" r="132" fill="url(#w3t)"/><circle cx="197" cy="548" r="85" fill="#0e0e10"/><path d="M196.7 416.5L196.8 463M196.7 416.5L209.9 464M196.8 463L203.4 463.2M203.4 463.2L209.9 464M196.8 463L202.7 472.2M216.9 418L209.9 464M209.9 464L237.9 423M209.9 464L216.7 465.3M216.7 465.3L223.4 467.2M237.9 423L223.4 467.2M237.9 423L233.8 471.4M223.4 467.2L228.7 469.1M228.7 469.1L233.8 471.4M253.9 429.4L233.8 471.4M233.8 471.4L271.1 439.4M233.8 471.4L239.5 474.4M239.5 474.4L244.9 477.8M233.8 471.4L235 482.2M271.1 439.4L244.9 477.8M271.1 439.4L255 485.9M244.9 477.8L250.1 481.6M250.1 481.6L255 485.9M286.8 451.9L255 485.9M255 485.9L298.8 464.7M255 485.9L259 489.9M259 489.9L262.8 494.2M298.8 464.7L262.8 494.2M298.8 464.7L270.6 505.5M262.8 494.2L266.9 499.7M266.9 499.7L270.6 505.5M262.8 494.2L259.5 504.8M310.9 482.3L270.6 505.5M270.6 505.5L319.7 500.6M270.6 505.5L273.7 511.3M273.7 511.3L276.3 517.4M319.7 500.6L276.3 517.4M319.7 500.6L280.1 530.1M276.3 517.4L278.4 523.6M278.4 523.6L280.1 530.1M325.5 520.2L280.1 530.1M280.1 530.1L328 536M280.1 530.1L281 535.1M281 535.1L281.6 540.3M280.1 530.1L272.1 536.5M328 536L281.6 540.3M328 536L281.8 553.7M281.6 540.3L282 547M282 547L281.8 553.7M328.2 556.8L281.8 553.7M281.8 553.7L325.7 575.2M281.8 553.7L281.2 559.6M281.2 559.6L280.2 565.6M325.7 575.2L280.2 565.6M325.7 575.2L275.7 580M280.2 565.6L278.3 572.9M278.3 572.9L275.7 580M280.2 565.6L269.7 570.3M318.8 597.6L275.7 580M275.7 580L310.4 614.6M275.7 580L273.2 585.6M273.2 585.6L270.3 591.1M310.4 614.6L270.3 591.1M310.4 614.6L264.4 599.8M270.3 591.1L267.5 595.5M267.5 595.5L264.4 599.8M301.3 628.1L264.4 599.8M264.4 599.8L284.6 646.1M264.4 599.8L259.3 605.8M259.3 605.8L253.6 611.4M264.4 599.8L252.7 599.7M284.6 646.1L253.6 611.4M284.6 646.1L243.6 619.1M253.6 611.4L248.7 615.4M248.7 615.4L243.6 619.1M269 658L243.6 619.1M243.6 619.1L253.3 666.8M243.6 619.1L238.6 622.1M238.6 622.1L233.4 624.8M253.3 666.8L233.4 624.8M253.3 666.8L221.7 629.3M233.4 624.8L227.6 627.3M227.6 627.3L221.7 629.3M233.4 624.8L224.4 618.9M235.2 673.8L221.7 629.3M221.7 629.3L218.4 677.8M221.7 629.3L216.3 630.8M216.3 630.8L210.8 631.9M218.4 677.8L210.8 631.9M218.4 677.8L198.6 633M210.8 631.9L204.8 632.6M204.8 632.6L198.6 633M199.6 679.5L198.6 633M198.6 633L177.3 678M198.6 633L191.4 632.8M191.4 632.8L184.2 632M198.6 633L192 623.8M177.3 678L184.2 632M177.3 678L173.4 629.7M184.2 632L178.8 631M178.8 631L173.4 629.7M160.5 674.3L173.4 629.7M173.4 629.7L141.4 667.2M173.4 629.7L167.1 627.6M167.1 627.6L161.1 625M141.4 667.2L161.1 625M141.4 667.2L149.8 618.7M161.1 625L155.3 622.1M155.3 622.1L149.8 618.7M161.1 625L159.7 614.2M124 657.4L149.8 618.7M149.8 618.7L109.4 646.1M149.8 618.7L145 615.2M145 615.2L140.4 611.4M109.4 646.1L140.4 611.4M109.4 646.1L130.6 601.1M140.4 611.4L135.3 606.4M135.3 606.4L130.6 601.1M94.3 630.1L130.6 601.1M130.6 601.1L83.3 614M130.6 601.1L126.9 596M126.9 596L123.5 590.7M130.6 601.1L134.3 590.9M83.3 614L123.5 590.7M83.3 614L117.5 578M123.5 590.7L120.2 584.4M120.2 584.4L117.5 578M73.9 594.4L117.5 578M117.5 578L68.8 577.2M117.5 578L115.6 572.5M115.6 572.5L114.1 566.9M68.8 577.2L114.1 566.9M68.8 577.2L112.2 553.9M114.1 566.9L112.9 560.4M112.9 560.4L112.2 553.9M114.1 566.9L121.8 559.1M65.8 557.1L112.2 553.9M112.2 553.9L65.9 538.2M112.2 553.9L112 547.8M112 547.8L112.2 541.6M65.9 538.2L112.2 541.6M65.9 538.2L114.3 528.5M112.2 541.6L113 535.1M113 535.1L114.3 528.5M69 517.9L114.3 528.5M114.3 528.5L74.5 500.2M114.3 528.5L115.8 522.8M115.8 522.8L117.8 517.1M114.3 528.5L124.4 525.4M74.5 500.2L117.8 517.1M74.5 500.2L123 506.2M117.8 517.1L120.2 511.5M120.2 511.5L123 506.2M82.5 483.3L123 506.2M123 506.2L95.8 464M123 506.2L127 499.7M127 499.7L131.6 493.7M95.8 464L131.6 493.7M95.8 464L140.4 484.6M131.6 493.7L135.9 489M135.9 489L140.4 484.6M131.6 493.7L142.3 495.2M109.5 449.8L140.4 484.6M140.4 484.6L124.4 438.4M140.4 484.6L145.1 480.7M145.1 480.7L150.1 477.1M124.4 438.4L150.1 477.1M124.4 438.4L160.8 471.1M150.1 477.1L155.3 473.9M155.3 473.9L160.8 471.1M140.9 429.1L160.8 471.1M160.8 471.1L157.3 422.6M160.8 471.1L166 468.9M166 468.9L171.3 467M160.8 471.1L169.3 477.2M157.3 422.6L171.3 467M157.3 422.6L183.4 464.1M171.3 467L177.3 465.3M177.3 465.3L183.4 464.1M176 418.2L183.4 464.1M183.4 464.1L196.7 416.5M183.4 464.1L190.1 463.3M190.1 463.3L196.8 463" stroke="#c8c4c4" stroke-width="1" fill="none" opacity="0.72"/><circle cx="197" cy="548" r="131.5" fill="none" stroke="#d0c8c0" stroke-width="1.2"/><g transform="translate(197.1 550) scale(0.76 0.76) rotate(0)"><clipPath id="w3cl"><circle cx="0" cy="0" r="95"/></clipPath><circle cx="0" cy="0" r="100" fill="url(#w3rg)"/><g clip-path="url(#w3cl)"><path d="M10.5 -89.4 L21 -87.5 L31.3 -84.4 L41.1 -80.1 L50.3 -74.6 L58.8 -68.1 L66.5 -60.6 L73.2 -52.3 L78.9 -43.2 L38.5 -26.9 L35.9 -30.3 L33 -33.5 L29.8 -36.4 L26.3 -39 L22.6 -41.2 L18.7 -43.1 L14.7 -44.7 L10.5 -45.8Z" fill="#404040" filter="url(#w3bl)"/><path d="M16.8 -84.9 L25.2 -82.8 L33.3 -79.9 L41 -76.2 L48.4 -71.8 L55.3 -66.6 L61.6 -60.8 L67.4 -54.3 L72.4 -47.4 L44.9 -36.3 L42.1 -39.5 L39 -42.5 L35.8 -45.3 L32.3 -47.9 L28.6 -50.1 L24.8 -52.1 L20.9 -53.8 L16.8 -55.3Z" fill="#121212" filter="url(#w3bl)"/><path d="M86.8 -23.7 L88.2 -17.9 L89.2 -12 L89.8 -6 L90 0 L89.8 6 L89.2 12 L88.2 17.9 L86.8 23.7 L46.4 7.4 L46.7 5.6 L46.9 3.7 L47 1.9 L47 0 L47 -1.9 L46.9 -3.7 L46.7 -5.6 L46.4 -7.4Z" fill="#404040" filter="url(#w3bl)"/><path d="M85 -16.2 L85.7 -12.2 L86.2 -8.2 L86.5 -4.1 L86.6 0 L86.5 4.1 L86.2 8.2 L85.7 12.2 L85 16.2 L57.5 5.1 L57.6 3.8 L57.7 2.6 L57.7 1.3 L57.8 0 L57.7 -1.3 L57.7 -2.6 L57.6 -3.8 L57.5 -5.1Z" fill="#121212" filter="url(#w3bl)"/><path d="M78.9 43.2 L73.2 52.3 L66.5 60.6 L58.8 68.1 L50.3 74.6 L41.1 80.1 L31.3 84.4 L21 87.5 L10.5 89.4 L10.5 45.8 L14.7 44.7 L18.7 43.1 L22.6 41.2 L26.3 39 L29.8 36.4 L33 33.5 L35.9 30.3 L38.5 26.9Z" fill="#404040" filter="url(#w3bl)"/><path d="M72.4 47.4 L67.4 54.3 L61.6 60.8 L55.3 66.6 L48.4 71.8 L41 76.2 L33.3 79.9 L25.2 82.8 L16.8 84.9 L16.8 55.3 L20.9 53.8 L24.8 52.1 L28.6 50.1 L32.3 47.9 L35.8 45.3 L39 42.5 L42.1 39.5 L44.9 36.3Z" fill="#121212" filter="url(#w3bl)"/><path d="M-10.5 89.4 L-21 87.5 L-31.3 84.4 L-41.1 80.1 L-50.3 74.6 L-58.8 68.1 L-66.5 60.6 L-73.2 52.3 L-78.9 43.2 L-38.5 26.9 L-35.9 30.3 L-33 33.5 L-29.8 36.4 L-26.3 39 L-22.6 41.2 L-18.7 43.1 L-14.7 44.7 L-10.5 45.8Z" fill="#404040" filter="url(#w3bl)"/><path d="M-16.8 84.9 L-25.2 82.8 L-33.3 79.9 L-41 76.2 L-48.4 71.8 L-55.3 66.6 L-61.6 60.8 L-67.4 54.3 L-72.4 47.4 L-44.9 36.3 L-42.1 39.5 L-39 42.5 L-35.8 45.3 L-32.3 47.9 L-28.6 50.1 L-24.8 52.1 L-20.9 53.8 L-16.8 55.3Z" fill="#121212" filter="url(#w3bl)"/><path d="M-86.8 23.7 L-88.2 17.9 L-89.2 12 L-89.8 6 L-90 0 L-89.8 -6 L-89.2 -12 L-88.2 -17.9 L-86.8 -23.7 L-46.4 -7.4 L-46.7 -5.6 L-46.9 -3.7 L-47 -1.9 L-47 0 L-47 1.9 L-46.9 3.7 L-46.7 5.6 L-46.4 7.4Z" fill="#404040" filter="url(#w3bl)"/><path d="M-85 16.2 L-85.7 12.2 L-86.2 8.2 L-86.5 4.1 L-86.6 0 L-86.5 -4.1 L-86.2 -8.2 L-85.7 -12.2 L-85 -16.2 L-57.5 -5.1 L-57.6 -3.8 L-57.7 -2.6 L-57.7 -1.3 L-57.8 0 L-57.7 1.3 L-57.7 2.6 L-57.6 3.8 L-57.5 5.1Z" fill="#121212" filter="url(#w3bl)"/><path d="M-78.9 -43.2 L-73.2 -52.3 L-66.5 -60.6 L-58.8 -68.1 L-50.3 -74.6 L-41.1 -80.1 L-31.3 -84.4 L-21 -87.5 L-10.5 -89.4 L-10.5 -45.8 L-14.7 -44.7 L-18.7 -43.1 L-22.6 -41.2 L-26.3 -39 L-29.8 -36.4 L-33 -33.5 L-35.9 -30.3 L-38.5 -26.9Z" fill="#404040" filter="url(#w3bl)"/><path d="M-72.4 -47.4 L-67.4 -54.3 L-61.6 -60.8 L-55.3 -66.6 L-48.4 -71.8 L-41 -76.2 L-33.3 -79.9 L-25.2 -82.8 L-16.8 -84.9 L-16.8 -55.3 L-20.9 -53.8 L-24.8 -52.1 L-28.6 -50.1 L-32.3 -47.9 L-35.8 -45.3 L-39 -42.5 L-42.1 -39.5 L-44.9 -36.3Z" fill="#121212" filter="url(#w3bl)"/></g></g><path d="M202.3 517.4L202.1 480.2M204.6 517.9L209.6 481.1M206.8 518.4L216 482.6M208.9 519.2L223.5 485.2M211 520L226.3 486.4M213.1 521L233.7 490.4M215.1 522.2L227.9 487.2M216.9 523.5L238.2 493.4M218.7 524.9L247.6 501.6M220.5 526.4L248.8 502.9M222.1 528L254.6 510.3M223.5 529.7L251.6 506.1M224.9 531.6L257.7 515.1M226.1 533.5L259 517.5M230.1 543.4L264.4 531M230.5 545.2L265.6 536.2M230.8 547.2L265 533.4M230.9 549.1L266.4 541.1M231 551L266.9 546.9M230.9 552.9L266.2 560.7M230.8 554.8L265.7 563.6M230.5 556.8L266.3 560.1M230.1 558.6L262.9 573.5M226.1 568.5L262.5 574.6M224.9 570.4L257.1 586M223.5 572.3L257.6 585.1M222.1 574L255.4 588.6M220.5 575.6L243.6 602.2M218.7 577.1L246.1 599.9M216.9 578.5L241.7 603.9M215.1 579.8L227.8 612.9M213.1 581L223.8 614.7M211 582L225.9 613.8M208.9 582.8L211.4 618.5M206.8 583.6L211.5 618.5M204.6 584.1L203.7 619.7M202.3 584.6L204.5 619.6M191.7 584.6L187.5 619.4M189.4 584.1L185.2 619M187.2 583.6L175.7 616.7M185.1 582.8L171.1 615M183 582L173.4 615.9M180.9 581L167.2 613.3M178.9 579.8L164.4 611.9M177.1 578.5L159.6 609.1M175.3 577.1L155.6 606.5M173.5 575.6L148.6 600.6M171.9 574L141.8 593.1M170.5 572.3L143.4 595M169.1 570.4L134.9 582.3M167.9 568.5L134.4 581.4M163.9 558.6L130.6 572.1M163.5 556.8L127.8 560.4M163.2 554.8L127.7 560.2M163.1 552.9L127.4 557.5M163 551L127 550.3M163.1 549.1L127.4 542.2M163.2 547.2L127.1 546.3M163.5 545.2L130.3 528.8M163.9 543.4L128.2 536.9M167.9 533.5L135 517.6M169.1 531.6L138.6 511.4M170.5 529.7L135.7 516.2M171.9 528L145.4 502.7M173.5 526.4L145.3 502.8M175.3 524.9L151.7 496.6M177.1 523.5L150.1 498M178.9 522.2L155.1 493.9M180.9 521L161.5 489.7M183 520L176.8 483M185.1 519.2L172.3 484.5M187.2 518.4L185.5 480.9M189.4 517.9L193.8 480.1M191.7 517.4L199.8 480.1" stroke="#d8d8d8" stroke-width="0.8" fill="none" opacity="0.8"/><circle cx="197.2" cy="555" r="36" fill="#0a0a0a" filter="url(#w3bl)"/><circle cx="197.2" cy="554.5" r="35" fill="#080808"/><circle cx="197.2" cy="551.7" r="30.7" fill="#2a190c"/></svg><svg style="left:420px;top:374px;overflow:hidden" width="495" height="344" viewBox="420 374 495 344"><defs><radialGradient id="w4rg"><stop offset="0.4" stop-color="#c4c4c4"/><stop offset="0.8" stop-color="#dedede"/><stop offset="0.95" stop-color="#d8d8d8"/><stop offset="1" stop-color="#b8b8b8"/></radialGradient><filter id="w4bl" x="-0.5" y="-0.5" width="2" height="2"><feGaussianBlur stdDeviation="2.6"/></filter><radialGradient id="w4tire" cx="0.5" cy="0.5" r="0.5"><stop offset="0.45" stop-color="#18181a"/><stop offset="0.62" stop-color="#222226"/><stop offset="0.88" stop-color="#2a2a2e"/><stop offset="1" stop-color="#202024"/></radialGradient><linearGradient id="w4hub" x1="0" x2="0.3" y1="1" y2="0"><stop offset="0" stop-color="#5a5652"/><stop offset="0.45" stop-color="#84807c"/><stop offset="1" stop-color="#a4a09c"/></linearGradient><filter id="w4b2" x="-0.3" y="-0.3" width="1.6" height="1.6"><feGaussianBlur stdDeviation="2"/></filter><filter id="w4b1" x="-0.3" y="-0.3" width="1.6" height="1.6"><feGaussianBlur stdDeviation="0.8"/></filter></defs><ellipse cx="609.5" cy="541.5" rx="89.5" ry="97.5" fill="#121214"/><path d="M617.6 448.9 A80.7 92.5 0 0 0 617.6 633.9" fill="none" stroke="#222226" stroke-width="1.6" filter="url(#w4b1)"/><path d="M614.5 449 A84.1 92.5 0 0 0 614.5 634" fill="none" stroke="#222226" stroke-width="1.6" filter="url(#w4b1)"/><path d="M611.8 449 A87.1 92.5 0 0 0 611.8 634" fill="none" stroke="#222226" stroke-width="1.6" filter="url(#w4b1)"/><ellipse cx="622" cy="541.4" rx="76" ry="97.5" fill="url(#w4tire)"/><ellipse cx="622" cy="541.4" rx="73" ry="94.5" fill="none" stroke="#303036" stroke-width="2.5" stroke-dasharray="1.5 2" opacity="0.6"/><ellipse cx="629.7" cy="543.8" rx="48.7" ry="59.3" fill="#0c0c0e" filter="url(#w4b2)"/><g transform="translate(627.7 541.8) scale(0.4570 0.5530)"><clipPath id="w4cl"><circle cx="0" cy="0" r="95"/></clipPath><circle cx="0" cy="0" r="100" fill="url(#w4rg)"/><g clip-path="url(#w4cl)"><path d="M71.7 57.6 L66.1 64 L59.9 69.8 L53.2 75.1 L46 79.7 L38.4 83.6 L30.5 86.8 L22.4 89.2 L14 90.9 L14 41.7 L16.1 41 L18.1 40.1 L20.1 39.2 L22 38.1 L23.9 37 L25.7 35.7 L27.4 34.4 L29.1 33Z" fill="#303030" filter="url(#w4bl)"/><path d="M62.6 62 L58.4 66.1 L53.8 69.8 L49.1 73.2 L44.1 76.3 L38.9 79.1 L33.5 81.5 L28 83.6 L22.4 85.3 L22.4 51.3 L23.8 50.7 L25.2 50 L26.6 49.3 L28 48.5 L29.3 47.7 L30.7 46.9 L32 46 L33.2 45.1Z" fill="#18181a" filter="url(#w4bl)"/><path d="M-14 90.9 L-22.4 89.2 L-30.5 86.8 L-38.4 83.6 L-46 79.7 L-53.2 75.1 L-59.9 69.8 L-66.1 64 L-71.7 57.6 L-29.1 33 L-27.4 34.4 L-25.7 35.7 L-23.9 37 L-22 38.1 L-20.1 39.2 L-18.1 40.1 L-16.1 41 L-14 41.7Z" fill="#303030" filter="url(#w4bl)"/><path d="M-22.4 85.3 L-28 83.6 L-33.5 81.5 L-38.9 79.1 L-44.1 76.3 L-49.1 73.2 L-53.8 69.8 L-58.4 66.1 L-62.6 62 L-33.2 45.1 L-32 46 L-30.7 46.9 L-29.3 47.7 L-28 48.5 L-26.6 49.3 L-25.2 50 L-23.8 50.7 L-22.4 51.3Z" fill="#18181a" filter="url(#w4bl)"/><path d="M-85.7 33.3 L-88.5 25.3 L-90.4 17 L-91.6 8.5 L-92 0 L-91.6 -8.5 L-90.4 -17 L-88.5 -25.3 L-85.7 -33.3 L-43.1 -8.7 L-43.5 -6.6 L-43.8 -4.4 L-43.9 -2.2 L-44 -0 L-43.9 2.2 L-43.8 4.4 L-43.5 6.6 L-43.1 8.7Z" fill="#303030" filter="url(#w4bl)"/><path d="M-85 23.2 L-86.4 17.5 L-87.4 11.7 L-88 5.9 L-88.2 0 L-88 -5.9 L-87.4 -11.7 L-86.4 -17.5 L-85 -23.2 L-55.6 -6.3 L-55.8 -4.7 L-55.9 -3.1 L-56 -1.6 L-56 -0 L-56 1.6 L-55.9 3.1 L-55.8 4.7 L-55.6 6.3Z" fill="#18181a" filter="url(#w4bl)"/><path d="M-71.7 -57.6 L-66.1 -64 L-59.9 -69.8 L-53.2 -75.1 L-46 -79.7 L-38.4 -83.6 L-30.5 -86.8 L-22.4 -89.2 L-14 -90.9 L-14 -41.7 L-16.1 -41 L-18.1 -40.1 L-20.1 -39.2 L-22 -38.1 L-23.9 -37 L-25.7 -35.7 L-27.4 -34.4 L-29.1 -33Z" fill="#303030" filter="url(#w4bl)"/><path d="M-62.6 -62 L-58.4 -66.1 L-53.8 -69.8 L-49.1 -73.2 L-44.1 -76.3 L-38.9 -79.1 L-33.5 -81.5 L-28 -83.6 L-22.4 -85.3 L-22.4 -51.3 L-23.8 -50.7 L-25.2 -50 L-26.6 -49.3 L-28 -48.5 L-29.3 -47.7 L-30.7 -46.9 L-32 -46 L-33.2 -45.1Z" fill="#18181a" filter="url(#w4bl)"/><path d="M14 -90.9 L22.4 -89.2 L30.5 -86.8 L38.4 -83.6 L46 -79.7 L53.2 -75.1 L59.9 -69.8 L66.1 -64 L71.7 -57.6 L29.1 -33 L27.4 -34.4 L25.7 -35.7 L23.9 -37 L22 -38.1 L20.1 -39.2 L18.1 -40.1 L16.1 -41 L14 -41.7Z" fill="#303030" filter="url(#w4bl)"/><path d="M22.4 -85.3 L28 -83.6 L33.5 -81.5 L38.9 -79.1 L44.1 -76.3 L49.1 -73.2 L53.8 -69.8 L58.4 -66.1 L62.6 -62 L33.2 -45.1 L32 -46 L30.7 -46.9 L29.3 -47.7 L28 -48.5 L26.6 -49.3 L25.2 -50 L23.8 -50.7 L22.4 -51.3Z" fill="#18181a" filter="url(#w4bl)"/><path d="M85.7 -33.3 L88.5 -25.3 L90.4 -17 L91.6 -8.5 L92 -0 L91.6 8.5 L90.4 17 L88.5 25.3 L85.7 33.3 L43.1 8.7 L43.5 6.6 L43.8 4.4 L43.9 2.2 L44 -0 L43.9 -2.2 L43.8 -4.4 L43.5 -6.6 L43.1 -8.7Z" fill="#303030" filter="url(#w4bl)"/><path d="M85 -23.2 L86.4 -17.5 L87.4 -11.7 L88 -5.9 L88.2 -0 L88 5.9 L87.4 11.7 L86.4 17.5 L85 23.2 L55.6 6.3 L55.8 4.7 L55.9 3.1 L56 1.6 L56 -0 L56 -1.6 L55.9 -3.1 L55.8 -4.7 L55.6 -6.3Z" fill="#18181a" filter="url(#w4bl)"/></g></g><ellipse cx="628.8" cy="542.2" rx="19.1" ry="22.5" fill="url(#w4hub)"/><clipPath id="w4hc"><ellipse cx="628.8" cy="542.2" rx="19.1" ry="22.5"/></clipPath><ellipse clip-path="url(#w4hc)" cx="609.8" cy="540.2" rx="19.1" ry="22.5" fill="#2e1a0c" stroke="#080808" stroke-width="1.2"/></svg>
<div class="a ico" style="left:3px;top:73px"></div>
<svg style="left:3px;top:73px" width="15" height="15" viewBox="0 0 15 15" shape-rendering="crispEdges"><rect x="4.5" y="5.5" width="4" height="3" fill="none" stroke="#101060" stroke-width="1.4"/><path d="M9 9 L11 11" stroke="#101060"/></svg>
<div class="l3d" style="left:19px;top:73px;line-height:14px">3D</div>
<div class="a ico" style="left:421px;top:73px"></div>
<svg style="left:421px;top:73px" width="15" height="15" viewBox="0 0 15 15" shape-rendering="crispEdges"><rect x="4.5" y="5.5" width="4" height="3" fill="none" stroke="#101060" stroke-width="1.4"/><path d="M9 9 L11 11" stroke="#101060"/></svg>
<div class="l3d" style="left:437px;top:73px;line-height:14px">3D</div>
<div class="a ico" style="left:3px;top:375px"></div>
<svg style="left:3px;top:375px" width="15" height="15" viewBox="0 0 15 15" shape-rendering="crispEdges"><rect x="4.5" y="5.5" width="4" height="3" fill="none" stroke="#101060" stroke-width="1.4"/><path d="M9 9 L11 11" stroke="#101060"/></svg>
<div class="l3d" style="left:19px;top:375px;line-height:14px">3D</div>
<div class="a ico" style="left:421px;top:375px"></div>
<svg style="left:421px;top:375px" width="15" height="15" viewBox="0 0 15 15" shape-rendering="crispEdges"><rect x="4.5" y="7.5" width="3" height="3" fill="none" stroke="#101060" stroke-width="1.2"/><path d="M8 11 V4 L9 3" stroke="#101060" stroke-width="1.3" fill="none"/></svg>
<div class="l3d" style="left:437px;top:375px;line-height:14px">3D</div>
<div class="a" style="left:917px;top:71px;width:107px;height:647px;background:#e3e3ea"></div>
<div class="a lb" style="left:918px;top:73px;width:105px;height:171px;background:#fff;border:1px solid #000">
<div style="left:0;top:73px;top:0"></div>
<div style="left:0px;top:0px;">BODY_H</div>
<div style="left:0px;top:13px;background:#b0b0bc;">WHL0_H:m</div>
<div style="left:0px;top:26px;">WHL3_H:m</div>
<div style="left:0px;top:39px;">WHL1_H:m</div>
<div style="left:0px;top:52px;">WHL2_H:m</div>
</div>
<div class="btn" style="left:918px;top:245px;width:53px;height:17px">Hide All</div>
<div class="btn" style="left:972px;top:245px;width:50px;height:17px">Show All</div>
<div class="btn" style="left:918px;top:261px;width:53px;height:17px">Select All</div>
<div class="btn" style="left:972px;top:261px;width:50px;height:17px">Deselect</div>
<div class="a" style="left:917px;top:281px;width:16px;height:17px;background:#ececf0;border-top:1px solid #fff;border-left:1px solid #fff;border-right:1px solid #8c8c94;border-bottom:1px solid #8c8c94"></div>
<svg style="left:917px;top:281px" width="16" height="17" viewBox="0 0 16 17" shape-rendering="crispEdges"><path d="M7 4.5 L3.5 8.5 L7 12.5 M10 4.5 L13.5 8.5 L10 12.5" stroke="#000" fill="none" stroke-width="1.1" shape-rendering="auto"/></svg>
<div class="a" style="left:937px;top:283px;width:80px;height:14px;background:#ebe9db;border-top:1px solid #fff;border-left:1px solid #fff;border-bottom:1px solid #b8b6a8;border-right:1px solid #b8b6a8"></div>
<svg style="left:937px;top:283px" width="80" height="14" viewBox="0 0 80 14" shape-rendering="crispEdges"><path d="M30 6.5 L40 2.5 L50 6.5 M30 9.5 L40 5.5 L50 9.5" stroke="#000" fill="none" stroke-width="1.1" shape-rendering="auto"/></svg>
<div class="a" style="left:917px;top:298px;width:105px;height:360px;overflow:hidden">
<div class="ri" style="left:0px;top:-8px;width:103px">Modify...</div>
<div class="ri" style="left:10px;top:8px;width:93px">Extended...</div>
<div class="ri" style="left:10px;top:24px;width:93px">Align...</div>
<div class="ri box" style="left:10px;top:40px;width:93px">Move</div>
<div class="ri" style="left:10px;top:56px;width:93px">Rotate</div>
<div class="ri" style="left:10px;top:72px;width:93px">Scale</div>
<div class="ri" style="left:10px;top:88px;width:93px">Mirror</div>
<div class="ri" style="left:10px;top:104px;width:93px">Break</div>
<div class="ri" style="left:10px;top:120px;width:93px">Reorient</div>
<div class="ri" style="left:10px;top:136px;width:93px">Delete</div>
<div class="ri" style="left:10px;top:152px;width:93px">Spline...</div>
<div class="ri" style="left:0px;top:168px;width:103px">Surface...</div>
<div class="ri box" style="left:0px;top:184px;width:103px">Select...</div>
<div class="ri" style="left:10px;top:200px;width:93px">Single</div>
<div class="ri box" style="left:10px;top:216px;width:93px">Quadr</div>
<div class="ri" style="left:10px;top:232px;width:93px">Circle</div>
<div class="ri" style="left:10px;top:248px;width:93px">Separated</div>
<div class="ri" style="left:10px;top:264px;width:93px">All</div>
<div class="ri" style="left:10px;top:280px;width:93px">None</div>
<div class="ri" style="left:10px;top:296px;width:93px">Invert</div>
<div class="ri" style="left:10px;top:312px;width:93px">By Material</div>
<div class="ri" style="left:10px;top:328px;width:93px">UV Mapped</div>
<div class="ri" style="left:0px;top:344px;width:103px">Display...</div>
</div>
<div class="a" style="left:931px;top:669px;width:80px;height:14px;background:#ebe9db;border-top:1px solid #fff;border-left:1px solid #fff;border-bottom:1px solid #b8b6a8;border-right:1px solid #b8b6a8"></div>
<svg style="left:931px;top:669px" width="80" height="14" viewBox="0 0 80 14" shape-rendering="crispEdges"><path d="M30 3.5 L40 7.5 L50 3.5 M30 6.5 L40 10.5 L50 6.5" stroke="#000" fill="none" stroke-width="1.1" shape-rendering="auto"/></svg>
<div class="a" style="left:917px;top:685px;width:34px;height:17px;border-top:1px solid #fff;border-left:1px solid #fff;border-bottom:2px solid #8c8c94;border-right:2px solid #8c8c94;background:#e4e4ea;font-size:12px;text-align:center;line-height:16px">EXT</div>
<div class="a" style="left:953px;top:685px;width:33px;height:17px;border-top:2px solid #8c8c94;border-left:2px solid #8c8c94;border-bottom:1px solid #fff;border-right:1px solid #fff;background:#f4f4f6;font-size:12px;text-align:center;line-height:16px">SEL</div>
<div class="a" style="left:989px;top:685px;width:34px;height:17px;border-top:1px solid #fff;border-left:1px solid #fff;border-bottom:2px solid #8c8c94;border-right:2px solid #8c8c94;background:#e4e4ea;font-size:12px;text-align:center;line-height:16px">MUL</div>
<div class="a" style="left:0;top:718px;width:1024px;height:20px;background:#e3e3ea"></div>
<div class="a" style="left:0;top:718px;width:915px;height:2px;background:#fbf8f8"></div>
<div class="a" style="left:917px;top:718px;width:107px;height:1px;background:#a0a0a8"></div>
<div class="a" style="left:917px;top:719px;width:107px;height:2px;background:#f4f4f6"></div>
<div class="sp" style="left:0px;width:751px">Click to display pop-up menu.</div>
<div class="sp" style="left:754px;width:65px">X: -7.1353</div>
<div class="sp" style="left:822px;width:66px">Y: 0.4790</div>
<div class="sp" style="left:890px;width:65px">Z: -5.3327</div>
<div class="sp" style="left:958px;width:66px">&nbsp;units</div>
</body></html>
